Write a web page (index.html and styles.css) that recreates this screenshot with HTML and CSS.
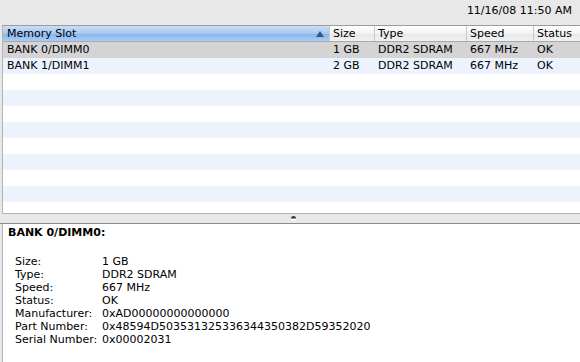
FILE: index.html
```html
<!DOCTYPE html>
<html lang="en">
<head>
    <meta charset="UTF-8">
    <title>Memory</title>
    <link rel="stylesheet" href="styles.css">
</head>
<body>
    <div class="toolbar">
        <span class="timestamp">11/16/08 11:50 AM</span>
    </div>

    <div class="table-view">
        <div class="table-header">
            <div class="col-head sorted">Memory Slot <span class="sort-arrow"></span></div>
            <div class="col-head">Size</div>
            <div class="col-head">Type</div>
            <div class="col-head">Speed</div>
            <div class="col-head">Status</div>
        </div>
        <div class="table-body">
            <div class="row selected">
                <div class="cell">BANK 0/DIMM0</div>
                <div class="cell">1 GB</div>
                <div class="cell">DDR2 SDRAM</div>
                <div class="cell">667 MHz</div>
                <div class="cell">OK</div>
            </div>
            <div class="row">
                <div class="cell">BANK 1/DIMM1</div>
                <div class="cell">2 GB</div>
                <div class="cell">DDR2 SDRAM</div>
                <div class="cell">667 MHz</div>
                <div class="cell">OK</div>
            </div>
            <div class="row empty"></div>
            <div class="row empty"></div>
            <div class="row empty"></div>
            <div class="row empty"></div>
            <div class="row empty"></div>
            <div class="row empty"></div>
            <div class="row empty"></div>
            <div class="row empty"></div>
            <div class="row empty"></div>
        </div>
    </div>

    <div class="splitter"><span class="grip"></span></div>

    <div class="detail-pane">
        <h4 class="detail-title">BANK 0/DIMM0:</h4>
        <dl class="detail-list">
            <dt>Size:</dt><dd>1 GB</dd>
            <dt>Type:</dt><dd>DDR2 SDRAM</dd>
            <dt>Speed:</dt><dd>667 MHz</dd>
            <dt>Status:</dt><dd>OK</dd>
            <dt>Manufacturer:</dt><dd>0xAD00000000000000</dd>
            <dt>Part Number:</dt><dd>0x48594D503531325336344350382D59352020</dd>
            <dt>Serial Number:</dt><dd>0x00002031</dd>
        </dl>
    </div>
</body>
</html>
```

FILE: styles.css
```css
/* --- Window --- */
html, body {
    margin: 0;
    height: 100%;
}

body {
    background-color: #e8e8e8;
    font-family: "DejaVu Sans", "Liberation Sans", sans-serif;
    font-size: 11px;
    color: #000;
    display: flex;
    flex-direction: column;
    overflow: hidden;
}

.toolbar {
    height: 25px;
    display: flex;
    justify-content: flex-end;
    align-items: center;
    padding-right: 8px;
    flex-shrink: 0;
}

.timestamp {
    margin-top: -4px;
}

/* --- Table --- */
.table-view {
    margin-left: 2px;
    height: 189px;
    border-top: 1px solid #9c9c9c;
    border-left: 1px solid #b4b4b4;
    border-bottom: 1px solid #b4b4b4;
    background-color: #fff;
    overflow: hidden;
    flex-shrink: 0;
    box-sizing: border-box;
}

.table-header,
.row {
    display: grid;
    grid-template-columns: 326px 45px 92px 67px 1fr;
}

.table-header {
    height: 15px;
    border-bottom: 1px solid #a9a9a9;
    background: linear-gradient(#ffffff, #f3f3f3 50%, #e8e8e8 51%, #f1f1f1);
}

.col-head {
    display: flex;
    align-items: center;
    padding-left: 3px;
    border-left: 1px solid #c9c9c9;
    line-height: 15px;
}

.col-head:first-child {
    border-left: none;
    padding-left: 4px;
}

.col-head.sorted {
    background: linear-gradient(#c9def7, #a5c8f1 50%, #86b3ec 51%, #a9cdf8);
    position: relative;
}

.sort-arrow {
    position: absolute;
    right: 5px;
    top: 5px;
    width: 0;
    height: 0;
    border-left: 4px solid transparent;
    border-right: 4px solid transparent;
    border-bottom: 6px solid #3d5479;
}

.row {
    height: 16px;
    line-height: 16px;
}

.row:nth-child(even) {
    background-color: #edf3fe;
}

.row.selected {
    background-color: #d4d4d4;
}

.cell {
    padding-left: 4px;
    white-space: nowrap;
    overflow: hidden;
}

/* --- Splitter --- */
.splitter {
    height: 9px;
    border-bottom: 1px solid #8c8c8c;
    background-color: #e8e8e8;
    display: flex;
    justify-content: center;
    align-items: center;
    flex-shrink: 0;
}

.grip {
    width: 5px;
    height: 5px;
    border-radius: 50%;
    background: linear-gradient(#333 40%, #fff 60%);
    margin-left: 7px;
}

/* --- Detail pane --- */
.detail-pane {
    flex: 1;
    margin-left: 2px;
    border-left: 1px solid #b4b4b4;
    background-color: #fff;
    padding: 2px 0 0 5px;
}

.detail-title {
    margin: 0;
    font-size: 11px;
    font-weight: bold;
    line-height: 14px;
}

.detail-list {
    display: grid;
    grid-template-columns: 87px 1fr;
    margin: 15px 0 0 7px;
    line-height: 13px;
}

.detail-list dt,
.detail-list dd {
    margin: 0;
    white-space: nowrap;
}
```
